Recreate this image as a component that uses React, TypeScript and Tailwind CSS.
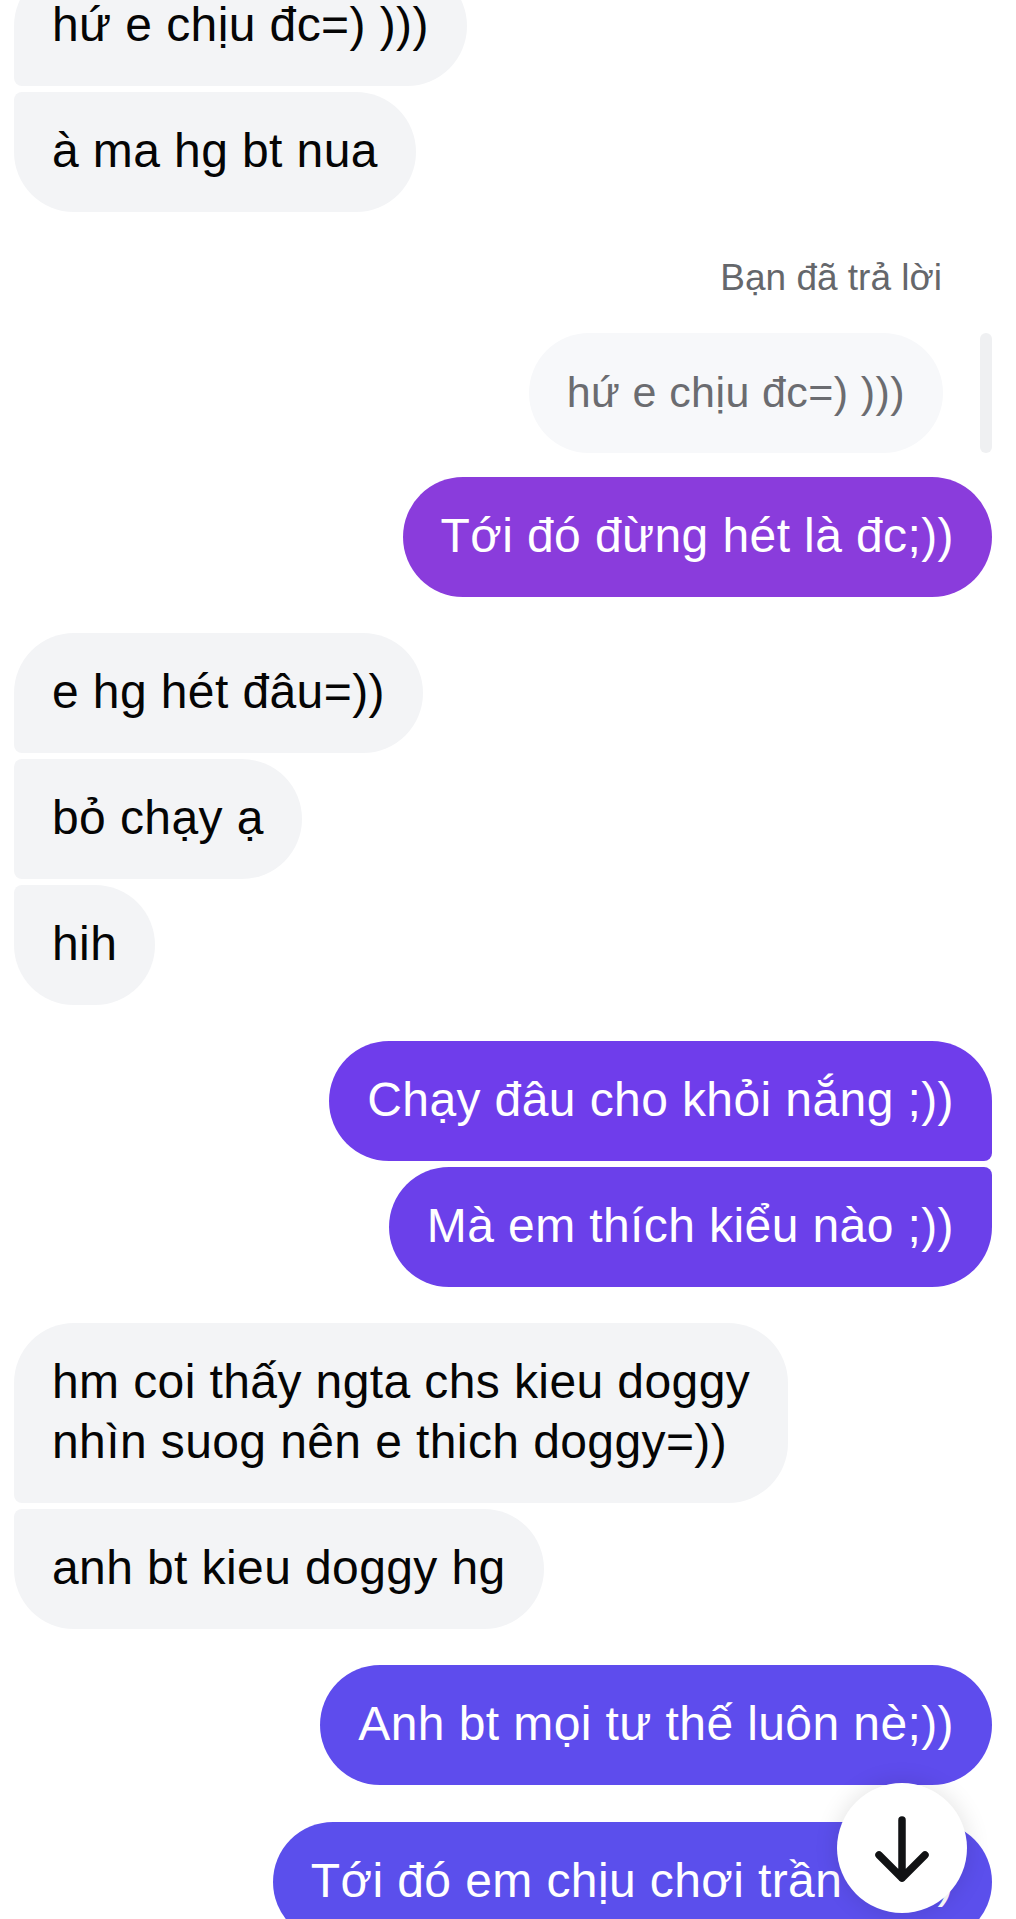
import React from "react";

const font = { fontFamily: '"Liberation Sans", Arial, sans-serif' };

function Left({ children, cls }: { children: React.ReactNode; cls: string }) {
  return (
    <div className="flex justify-start pl-[14px]">
      <div
        className={
          "bg-[#f3f4f6] text-[#050505] text-[48px] leading-[60px] tracking-[0.4px] pt-[29px] pb-[31px] px-[38px] whitespace-nowrap " +
          cls
        }
      >
        {children}
      </div>
    </div>
  );
}

function Right({ children, cls }: { children: React.ReactNode; cls: string }) {
  return (
    <div className="flex justify-end pr-[24px]">
      <div
        className={
          "text-white text-[48px] leading-[60px] tracking-[0.4px] pt-[29px] pb-[31px] px-[38px] whitespace-nowrap " +
          cls
        }
      >
        {children}
      </div>
    </div>
  );
}

export default function App() {
  return (
    <div
      className="relative w-[1016px] h-[1919px] overflow-hidden bg-white"
      style={font}
    >
      <div className="flex flex-col -mt-[34px]">
        {/* group 1 */}
        <div className="flex flex-col gap-[6px]">
          <Left cls="rounded-[60px] rounded-bl-[8px]">hứ e chịu đc=) )))</Left>
          <Left cls="rounded-[60px] rounded-tl-[8px]">à ma hg bt nua</Left>
        </div>

        {/* reply label */}
        <div className="mt-[44px] flex justify-end pr-[74px] text-[37px] leading-[44px] text-[#65676b]">
          Bạn đã trả lời
        </div>

        {/* quoted reply */}
        <div className="mt-[33px] flex justify-end items-stretch pr-[24px] gap-[37px]">
          <div className="bg-[#f7f8fa] text-[#6b6c70] text-[43px] leading-[60px] tracking-[0.4px] pt-[29px] pb-[31px] px-[38px] rounded-[60px] whitespace-nowrap">
            hứ e chịu đc=) )))
          </div>
          <div className="w-[12px] rounded-full bg-[#eff0f2]" />
        </div>

        <div className="mt-[24px]">
          <Right cls="rounded-[60px] bg-[#8a3cdc]">Tới đó đừng hét là đc;))</Right>
        </div>

        {/* group left */}
        <div className="mt-[36px] flex flex-col gap-[6px]">
          <Left cls="rounded-[60px] rounded-bl-[8px]">e hg hét đâu=))</Left>
          <Left cls="rounded-[60px] rounded-l-[8px]">bỏ chạy ạ</Left>
          <Left cls="rounded-[60px] rounded-tl-[8px]">hih</Left>
        </div>

        {/* group right */}
        <div className="mt-[36px] flex flex-col gap-[6px]">
          <Right cls="rounded-[60px] rounded-br-[8px] bg-[#6f3deb]">Chạy đâu cho khỏi nắng ;))</Right>
          <Right cls="rounded-[60px] rounded-tr-[8px] bg-[#6b40ea]">Mà em thích kiểu nào ;))</Right>
        </div>

        {/* group left */}
        <div className="mt-[36px] flex flex-col gap-[6px]">
          <Left cls="rounded-[60px] rounded-bl-[8px]">
            hm coi thấy ngta chs kieu doggy
            <br />
            nhìn suog nên e thich doggy=))
          </Left>
          <Left cls="rounded-[60px] rounded-tl-[8px]">anh bt kieu doggy hg</Left>
        </div>

        {/* group right */}
        <div className="mt-[36px] flex flex-col gap-[37px]">
          <Right cls="rounded-[60px] bg-[#5e4ced]">Anh bt mọi tư thế luôn nè;))</Right>
          <Right cls="rounded-[60px] bg-[#5b4fec]">Tới đó em chịu chơi trần ko;))</Right>
        </div>
      </div>

      {/* scroll-to-bottom button */}
      <div className="absolute left-[837px] top-[1783px] w-[130px] h-[130px] rounded-full bg-white shadow-[0_0_24px_rgba(0,0,0,0.12)] flex items-center justify-center">
        <svg width="130" height="130" viewBox="0 0 130 130" fill="none">
          <path
            d="M65 37 L65 95 M42 72 L65 95 L88 72"
            stroke="#111214"
            strokeWidth="7.5"
            strokeLinecap="round"
            strokeLinejoin="round"
          />
        </svg>
      </div>
    </div>
  );
}
